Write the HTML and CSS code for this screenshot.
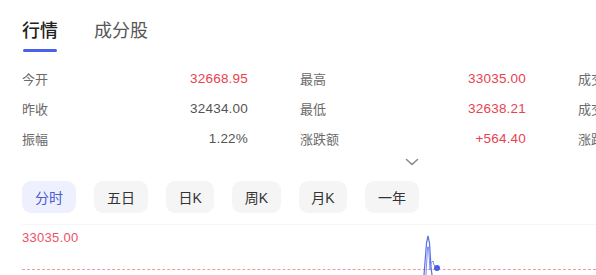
FILE: index.html
```html
<!DOCTYPE html>
<html lang="zh">
<head>
<meta charset="utf-8">
<link rel="stylesheet" href="styles.css">
</head>
<body>
<div class="page">
  <div class="tabs">
    <div class="tab active">行情<span class="bar"></span></div>
    <div class="tab">成分股</div>
  </div>
  <div class="stats">
    <div class="cell"><span class="lbl">今开</span><span class="val red">32668.95</span></div>
    <div class="cell"><span class="lbl">最高</span><span class="val red">33035.00</span></div>
    <div class="cell"><span class="lbl">成交量</span><span class="val"></span></div>
    <div class="cell"><span class="lbl">昨收</span><span class="val">32434.00</span></div>
    <div class="cell"><span class="lbl">最低</span><span class="val red">32638.21</span></div>
    <div class="cell"><span class="lbl">成交额</span><span class="val"></span></div>
    <div class="cell"><span class="lbl">振幅</span><span class="val">1.22%</span></div>
    <div class="cell"><span class="lbl">涨跌额</span><span class="val red">+564.40</span></div>
    <div class="cell"><span class="lbl">涨跌幅</span><span class="val"></span></div>
  </div>
  <div class="more">
    <svg width="14" height="8" viewBox="0 0 14 8"><path d="M1.5 1.5 L7 6.5 L12.5 1.5" fill="none" stroke="#8a8a8a" stroke-width="1.6" stroke-linecap="round" stroke-linejoin="round"/></svg>
  </div>
  <div class="periods">
    <div class="pbtn on">分时</div>
    <div class="pbtn">五日</div>
    <div class="pbtn k">日K</div>
    <div class="pbtn k">周K</div>
    <div class="pbtn k">月K</div>
    <div class="pbtn">一年</div>
  </div>
  <div class="chart">
    <div class="hi">33035.00</div>
    <div class="dash"></div>
    <svg class="line" width="40" height="50" viewBox="0 0 40 50">
      <path d="M2 50 L4.5 18 L6 11 L7.5 18 L9 42 L10 50" fill="none" stroke="#5a6ee6" stroke-width="1.2"/>
      <path d="M4 50 L5.5 22 L6.5 22 L8 45 L9 38 L11 36 L12 40 L15 43" fill="none" stroke="#7d8cf0" stroke-width="1"/>
      <circle cx="15" cy="43" r="3" fill="#4a5fe0"/>
    </svg>
  </div>
</div>
</body>
</html>
```
FILE: styles.css
```css
* { box-sizing: border-box; margin: 0; padding: 0; }
html, body { width: 596px; height: 275px; overflow: hidden; background: #fff; }
body { font-family: "Liberation Sans", "Noto Sans CJK SC", sans-serif; color: #333; }
.page { padding: 0 0 0 22px; width: 596px; }
.tabs { display: flex; gap: 36px; height: 52px; padding-top: 17px; }
.tab { position: relative; font-size: 18px; line-height: 24px; color: #555; font-family: "Noto Sans CJK SC", sans-serif; height: 35px; }
.tab.active { color: #222; font-weight: 500; }
.tab .bar { position: absolute; left: 1px; top: 32px; width: 34px; height: 3px; border-radius: 2px; background: #4a62e8; }
.stats { display: grid; grid-template-columns: 226px 226px 226px; column-gap: 52px; margin-top: 11px; width: 800px; }
.cell { display: flex; justify-content: space-between; align-items: center; height: 30px; font-size: 13px; }
.lbl { color: #6a6a6a; font-family: "Noto Sans CJK SC", sans-serif; }
.val { color: #555; font-size: 13.5px; letter-spacing: 0.2px; }
.val.red { color: #e8424f; }
.more { height: 12px; padding-left: 383px; padding-top: 5px; box-sizing: content-box; }
.more svg { display: block; }
.periods { display: flex; gap: 18px; margin-top: 11px; height: 44px; border-bottom: 1px solid #f6f6f6; width: 574px; }
.pbtn { height: 32px; padding: 0 13px; border-radius: 9px; background: #f5f5f6; color: #333; font-size: 14px; display: flex; align-items: center; font-family: "Liberation Sans", "Noto Sans CJK SC", sans-serif; }
.pbtn.k { padding: 0 12.5px; }
.pbtn.on { background: #eef1fd; color: #4a5bd4; }
.chart { position: relative; height: 50px; }
.hi { color: #e8526a; font-size: 13px; margin-top: 5px; letter-spacing: 0.3px; }
.dash { position: absolute; left: 0; right: 0; top: 39px; border-top: 1px dashed #f09aa0; }
.line { position: absolute; left: 400px; top: -5px; }
```
